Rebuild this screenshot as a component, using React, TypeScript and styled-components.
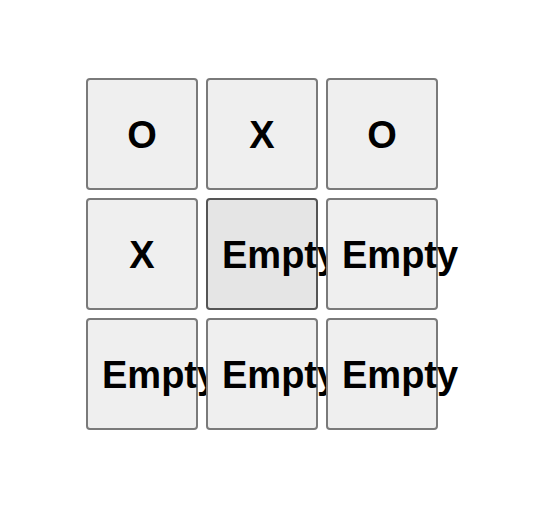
import styled, { createGlobalStyle } from "styled-components"

const GlobalStyle = createGlobalStyle`
  body {
    margin: 0;
    background: #ffffff;
    font-family: "Liberation Sans", Arial, sans-serif;
  }
`

const Page = styled.div`
  padding: 78px 0 0 86px;
`

const Board = styled.div`
  display: grid;
  grid-template-columns: repeat(3, 112px);
  grid-auto-rows: 112px;
  gap: 8px;
`

const Cell = styled.button<{ $hover?: boolean }>`
  box-sizing: border-box;
  width: 112px;
  height: 112px;
  padding: 2px 14px 0;
  display: flex;
  align-items: center;
  justify-content: safe center;
  border: 2px solid ${(p) => (p.$hover ? "#555555" : "#7a7a7a")};
  border-radius: 4px;
  background: ${(p) => (p.$hover ? "#e5e5e5" : "#efefef")};
  color: #000;
  font-family: "Liberation Sans", Arial, sans-serif;
  font-weight: bold;
  font-size: 38px;
  white-space: nowrap;
  overflow: visible;
  cursor: pointer;
`

const cells = ["O", "X", "O", "X", "Empty", "Empty", "Empty", "Empty", "Empty"]

const App = () => {
  return (
    <Page>
      <GlobalStyle />
      <Board>
        {cells.map((c, i) => (
          <Cell key={i} $hover={i === 4}>
            {c}
          </Cell>
        ))}
      </Board>
    </Page>
  )
}

export default App
